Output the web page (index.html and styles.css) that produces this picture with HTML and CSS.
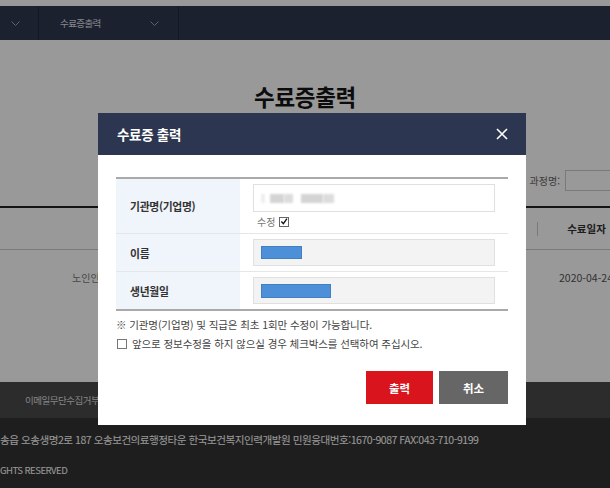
FILE: index.html
```html
<!DOCTYPE html>
<html lang="ko">
<head>
<meta charset="utf-8">
<title>수료증출력</title>
<link rel="stylesheet" href="styles.css">
</head>
<body>
<div class="page">
  <div class="topstrip"></div>
  <nav class="gnb">
    <div class="gnb-item gnb-first">
      <svg class="chev" width="9" height="5" viewBox="0 0 9 5"><polyline points="0.5,0.5 4.5,4.5 8.5,0.5" fill="none" stroke="#ffffff" stroke-width="1"/></svg>
    </div>
    <div class="gnb-item gnb-main">
      <span class="gnb-text">수료증출력</span>
      <svg class="chev" width="9" height="5" viewBox="0 0 9 5"><polyline points="0.5,0.5 4.5,4.5 8.5,0.5" fill="none" stroke="#ffffff" stroke-width="1"/></svg>
    </div>
  </nav>
  <main class="content">
    <h1 class="title">수료증출력</h1>
    <div class="search">
      <span class="search-label">과정명:</span>
      <span class="search-input"></span>
    </div>
    <div class="list">
      <div class="list-head">
        <div class="cell-main"></div>
        <div class="cell-date"><i class="sep"></i><span>수료일자</span></div>
      </div>
      <div class="list-row">
        <div class="cell-main">노인인권교육</div>
        <div class="cell-date">2020-04-24</div>
      </div>
    </div>
  </main>
  <footer class="footer">
    <div class="foot-links"><span>이메일무단수집거부</span></div>
    <div class="foot-info">
      <p class="addr">송읍 오송생명2로 187 오송보건의료행정타운 한국보건복지인력개발원 민원응대번호:1670-9087 FAX:043-710-9199</p>
      <p class="copy">GHTS RESERVED</p>
    </div>
  </footer>
</div>

<div class="dim"></div>

<div class="modal">
  <div class="modal-head">
    <h2 class="modal-title">수료증 출력</h2>
    <svg class="close" width="12" height="12" viewBox="0 0 12 12"><path d="M1 1 L11 11 M11 1 L1 11" stroke="#ffffff" stroke-width="1.6" fill="none"/></svg>
  </div>
  <div class="modal-body">
    <div class="form">
      <div class="form-row row-org">
        <div class="form-label">기관명(기업명)</div>
        <div class="form-value">
          <div class="field field-white">
            <span class="blur b1"></span><span class="blur b2"></span><span class="blur b3"></span><span class="blur b4"></span><span class="blur b5"></span>
          </div>
          <div class="edit">수정 <span class="check-on"><svg width="9" height="9" viewBox="0 0 9 9"><polyline points="1.5,4.5 3.8,7 7.8,1.2" fill="none" stroke="#111" stroke-width="1.5"/></svg></span></div>
        </div>
      </div>
      <div class="form-row">
        <div class="form-label">이름</div>
        <div class="form-value">
          <div class="field field-gray"><span class="mask mask-name"></span></div>
        </div>
      </div>
      <div class="form-row">
        <div class="form-label">생년월일</div>
        <div class="form-value">
          <div class="field field-gray"><span class="mask mask-birth"></span></div>
        </div>
      </div>
    </div>
    <p class="note">※ 기관명(기업명) 및 직급은 최초 1회만 수정이 가능합니다.</p>
    <p class="agree"><span class="check-off"></span>앞으로 정보수정을 하지 않으실 경우 체크박스를 선택하여 주십시오.</p>
    <div class="btns">
      <button class="btn btn-red">출력</button>
      <button class="btn btn-gray">취소</button>
    </div>
  </div>
</div>
</body>
</html>
```

FILE: styles.css
```css
* { box-sizing: border-box; }
html, body {
  margin: 0;
  padding: 0;
  width: 610px;
  height: 488px;
  overflow: hidden;
  background: #ffffff;
  font-family: "Noto Sans CJK KR", "Noto Sans", sans-serif;
}
p, h1, h2 { margin: 0; }

.page {
  width: 610px;
  height: 488px;
  display: flex;
  flex-direction: column;
  overflow: hidden;
}
.topstrip { height: 6px; flex: none; }

.gnb {
  height: 34px;
  flex: none;
  background: #2f3751;
  display: flex;
}
.gnb-item {
  display: flex;
  align-items: center;
  border-right: 1px solid #222838;
}
.gnb-first { width: 39px; padding-left: 11px; }
.gnb-main {
  width: 140px;
  padding: 0 19px 0 21px;
  justify-content: space-between;
}
.gnb-text {
  color: #ffffff;
  font-size: 9.5px;
  letter-spacing: -0.6px;
  opacity: 0.85;
}
.chev { opacity: 0.55; }

.content { flex: none; }
.title {
  margin-top: 41px;
  text-align: center;
  font-size: 22.5px;
  line-height: 30px;
  font-weight: 700;
  color: #151515;
  letter-spacing: -0.3px;
}
.search {
  margin-top: 59px;
  display: flex;
  justify-content: flex-end;
  align-items: center;
  margin-right: -20px;
}
.search-label {
  font-size: 10px;
  color: #666666;
  margin-right: 5px;
}
.search-input {
  width: 65px;
  height: 21px;
  border: 1px solid #cccccc;
  background: #ffffff;
}
.list {
  margin-top: 15px;
  margin-right: -25px;
  border-top: 2px solid #222222;
}
.list-head, .list-row {
  display: grid;
  grid-template-columns: 1fr 98px;
  align-items: center;
}
.list-head { height: 42px; border-bottom: 1px solid #cccccc; }
.list-row { height: 54px; }
.cell-main {
  padding-left: 72px;
  font-size: 10px;
  color: #777777;
}
.cell-date {
  font-size: 10.5px;
  color: #555555;
  text-align: center;
  position: relative;
}
.list-head .cell-date {
  font-weight: 700;
  color: #333333;
  display: flex;
  align-items: center;
}
.list-head .cell-date span { flex: 1; text-align: center; }
.sep {
  display: block;
  width: 1px;
  height: 14px;
  background: #cccccc;
}

.footer {
  margin-top: auto;
  height: 106px;
  flex: none;
  background: #333333;
}
.foot-links {
  height: 36px;
  background: #4a4a4a;
  display: flex;
  align-items: center;
  padding-left: 25px;
  font-size: 9.5px;
  letter-spacing: -0.5px;
  color: #dddddd;
}
.foot-info {
  padding-top: 14px;
  color: #ffffff;
}
.addr {
  line-height: 16px;
  white-space: nowrap;
  font-size: 10.6px;
  letter-spacing: -0.5px;
}
.copy {
  line-height: 16px;
  margin-top: 14px;
  font-size: 9.6px;
  letter-spacing: -0.55px;
}

.dim {
  position: fixed;
  inset: 0;
  background: rgba(0, 0, 0, 0.4);
}

.modal {
  position: absolute;
  left: 98px;
  top: 113px;
  width: 428px;
  background: #ffffff;
}
.modal-head {
  height: 42px;
  background: #2d3650;
  display: flex;
  align-items: center;
  justify-content: space-between;
  padding: 0 18px 0 19px;
}
.modal-title {
  color: #ffffff;
  font-size: 13.5px;
  font-weight: 700;
  letter-spacing: -0.3px;
}
.modal-body { padding: 22px 18px 21px; }

.form {
  border-top: 2px solid #a9a9a9;
  border-bottom: 2px solid #a9a9a9;
}
.form-row {
  display: grid;
  grid-template-columns: 124px 1fr;
  border-bottom: 1px solid #e6e6e6;
}
.form-row:last-child { border-bottom: none; }
.form-label {
  background: #f0f4fb;
  display: flex;
  align-items: center;
  padding-left: 14px;
  font-size: 10.8px;
  font-weight: 700;
  color: #333333;
  letter-spacing: -0.3px;
}
.form-value { padding: 5px 13px; }
.field {
  height: 27px;
  border: 1px solid #e0e0e0;
  display: flex;
  align-items: center;
  padding-left: 7px;
}
.field-white { background: #ffffff; height: 28px; }
.field-gray { background: #f3f3f3; }
.blur {
  display: inline-block;
  height: 9px;
  background: #d4d4d4;
  filter: blur(0.8px);
}
.b1 { width: 4px; background: #eeeeee; }
.b2 { width: 14px; margin-left: 5px; }
.b3 { width: 9px; background: #dcdcdc; }
.b4 { width: 22px; margin-left: 8px; }
.b5 { width: 11px; background: #dcdcdc; }
.edit {
  margin-top: 3px;
  padding-left: 4px;
  font-size: 10px;
  line-height: 13px;
  color: #777777;
  display: flex;
  align-items: center;
  gap: 4px;
}
.check-on {
  width: 10px;
  height: 10px;
  border: 1px solid #666666;
  display: inline-flex;
  align-items: center;
  justify-content: center;
  background: #ffffff;
}
.mask {
  display: block;
  background: #4e90d8;
  border: 1px solid #3f7fc4;
}
.mask-name { width: 41px; height: 13px; }
.mask-birth { width: 70px; height: 14px; }

.note {
  margin-top: 5px;
  font-size: 10.5px;
  line-height: 17px;
  color: #444444;
  letter-spacing: -0.1px;
}
.agree {
  margin-top: 2px;
  font-size: 10.5px;
  line-height: 17px;
  color: #444444;
  display: flex;
  align-items: center;
  letter-spacing: -0.1px;
}
.check-off {
  width: 10px;
  height: 10px;
  border: 1px solid #777777;
  background: #ffffff;
  margin: 0 5px 0 1px;
}
.btns {
  margin-top: 19px;
  display: flex;
  justify-content: flex-end;
  gap: 6px;
}
.btn {
  height: 33px;
  border: none;
  color: #ffffff;
  font-family: "Noto Sans CJK KR", "Noto Sans", sans-serif;
  font-size: 11.5px;
  font-weight: 700;
  padding: 0;
}
.btn-red { width: 67px; background: #d9141d; }
.btn-gray { width: 69px; background: #666666; }
```
